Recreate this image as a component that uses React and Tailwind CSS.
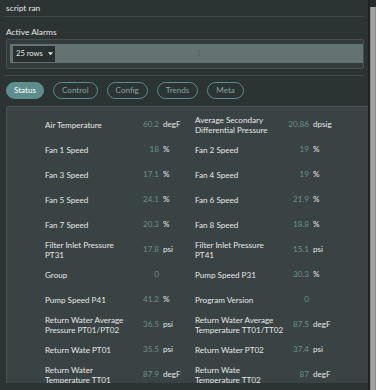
import React from 'react';

const rows = [
  [['Air Temperature', '60.2', 'degF'], ['Average Secondary\nDifferential Pressure', '20.86', 'dpsig']],
  [['Fan 1 Speed', '18', '%'], ['Fan 2 Speed', '19', '%']],
  [['Fan 3 Speed', '17.1', '%'], ['Fan 4 Speed', '19', '%']],
  [['Fan 5 Speed', '24.1', '%'], ['Fan 6 Speed', '21.9', '%']],
  [['Fan 7 Speed', '20.3', '%'], ['Fan 8 Speed', '18.8', '%']],
  [['Filter Inlet Pressure\nPT31', '17.8', 'psi'], ['Filter Inlet Pressure\nPT41', '15.1', 'psi']],
  [['Group', '0', ''], ['Pump Speed P31', '30.3', '%']],
  [['Pump Speed P41', '41.2', '%'], ['Program Version', '0', '']],
  [['Return Water Average\nPressure PT01/PT02', '36.5', 'psi'], ['Return Water Average\nTemperature TT01/TT02', '87.5', 'degF']],
  [['Return Wate PT01', '35.5', 'psi'], ['Return Water PT02', '37.4', 'psi']],
  [['Return Water\nTemperature TT01', '87.9', 'degF'], ['Return Wate\nTemperature TT02', '87', 'degF']],
];

const tabs = ['Status', 'Control', 'Config', 'Trends', 'Meta'];

function Cell({ item }) {
  const [label, value, unit] = item;
  return (
    <div className="flex items-center w-[150px]">
      <div className="w-[90px] text-[#e4e6e6] leading-[10px] whitespace-pre-line">{label}</div>
      <div className="w-[24px] text-right text-[#6d8e8c]">{value}</div>
      <div className="w-[36px] pl-[4px] text-[#e4e6e6]">{unit}</div>
    </div>
  );
}

export default function App() {
  return (
    <div
      className="w-[376px] h-[390px] overflow-hidden bg-[#2c3333] flex text-[8.1px]"
      style={{ fontFamily: 'Lato, "Open Sans", sans-serif' }}
    >
      <div className="flex-1 flex flex-col">
        <div className="mx-[4px] h-[17px] pl-[2px] pt-[2px] text-[8.4px] text-[#e4e6e6] border-b border-[#3f4848]">
          script ran
        </div>
        <div className="mx-[4px] pt-[9px] pb-[6px] border-b border-[#3f4848]">
          <div className="pl-[2px] text-[8.4px] text-[#e4e6e6] leading-[12px] mb-[1px]">Active Alarms</div>
          <div className="ml-[2px] h-[30px] bg-[#333c3c] border border-[#465050] rounded-[2px] pl-[3px] pt-[4px]">
            <div className="h-[19px] bg-[#647372] flex items-center pl-[3px]">
              <div className="h-[16px] w-[42px] bg-[#293030] flex items-center pl-[3px] text-[7.6px] text-[#e4e6e6] whitespace-nowrap">
                25 rows
                <svg width="5" height="4" viewBox="0 0 6 4" className="ml-[5px] shrink-0">
                  <path d="M0 0H6L3 3.5Z" fill="#e4e6e6" />
                </svg>
              </div>
              <div className="ml-[142px] text-[#56625f] text-[7px]">1</div>
            </div>
          </div>
        </div>
        <div className="flex gap-[9px] pl-[6px] pt-[6px]">
          {tabs.map((t, i) => (
            <div
              key={t}
              className={
                i === 0
                  ? 'h-[17px] px-[7px] flex items-center rounded-full bg-[#5d8e8d] border border-[#5d8e8d] text-white'
                  : 'h-[17px] px-[8px] flex items-center rounded-full border border-[#5d8e8d] text-[#82a3a1]'
              }
            >
              {t}
            </div>
          ))}
        </div>
        <div className="ml-[6px] mt-[7px] h-[277px] overflow-hidden bg-[#3a4343] border-l border-t border-[#4a5353] rounded-tl-[3px] pl-[38px] pt-[5px]">
          {rows.map((r, i) => (
            <div key={i} className="flex h-[25px]">
              <Cell item={r[0]} />
              <Cell item={r[1]} />
            </div>
          ))}
        </div>
      </div>
      <div className="w-[8px] flex">
        <div className="w-[2px] bg-[#1e2424]" />
        <div className="flex-1 bg-[#262c2c] pt-[7px]">
          <div className="h-full bg-[#a3a3a3] border-x border-[#8c8c8c]" />
        </div>
      </div>
    </div>
  );
}
